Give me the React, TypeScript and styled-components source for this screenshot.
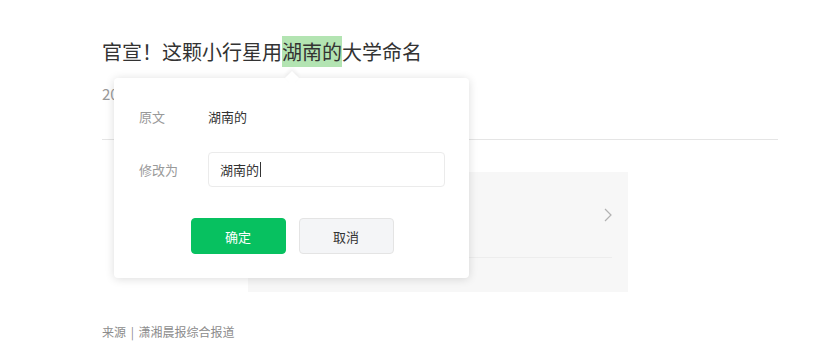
import React from 'react';
import styled, { createGlobalStyle } from 'styled-components';

const GlobalStyle = createGlobalStyle`
    html, body {
        margin: 0;
        padding: 0;
        background: #fff;
    }
    body {
        font-family: "Noto Sans CJK SC", "Noto Sans", "Liberation Sans", sans-serif;
        color: #333;
    }
`;

const Page = styled.div`
    position: relative;
    width: 837px;
    height: 364px;
    overflow: hidden;
`;

const Article = styled.article`
    width: 676px;
    padding: 36px 0 0 102px;
`;

const Title = styled.h1`
    margin: 0;
    font-size: 20px;
    font-weight: 400;
    line-height: 31px;
    color: #333;
`;

const Mark = styled.span`
    display: inline-block;
    background: #b3e4b2;
`;

const Meta = styled.div`
    margin-top: 17px;
    font-size: 15px;
    line-height: 20px;
    color: #999;
`;

const Divider = styled.hr`
    margin: 35px 0 0;
    border: 0;
    border-top: 1px solid #e5e5e5;
`;

const Card = styled.div`
    width: 380px;
    margin: 32px 0 0 146px;
    background: #f7f7f7;
    display: flex;
    flex-direction: column;
    padding: 0 16px;
    box-sizing: border-box;
`;

const CardMain = styled.div`
    height: 85px;
    display: flex;
    align-items: center;
    justify-content: flex-end;
    border-bottom: 1px solid #ededed;
    color: #b2b2b2;
`;

const CardFoot = styled.div`
    height: 34px;
`;

const Source = styled.p`
    margin: 31px 0 0;
    font-size: 12px;
    line-height: 17px;
    color: #8c8c8c;
    word-spacing: 2px;
`;

const Popover = styled.div`
    position: absolute;
    left: 114px;
    top: 78px;
    width: 355px;
    height: 200px;
    box-sizing: border-box;
    padding: 29px 24px 0 25px;
    background: #fff;
    border-radius: 4px;
    box-shadow: 0 1px 10px rgba(0, 0, 0, 0.14);

    &::before {
        content: '';
        position: absolute;
        top: -5px;
        left: 173px;
        width: 10px;
        height: 10px;
        background: #fff;
        transform: rotate(45deg);
        box-shadow: -2px -2px 4px rgba(0, 0, 0, 0.06);
    }
`;

const Row = styled.div<{ $top?: number }>`
    display: flex;
    align-items: center;
    margin-top: ${({ $top }) => $top || 0}px;
    font-size: 13px;
`;

const Label = styled.span`
    width: 69px;
    flex-shrink: 0;
    color: #999;
`;

const Value = styled.span`
    color: #333;
`;

const Field = styled.div`
    flex: 1;
    height: 35px;
    box-sizing: border-box;
    border: 1px solid #ebebeb;
    border-radius: 4px;
    padding-left: 11px;
    display: flex;
    align-items: center;
    color: #333;
    font-size: 13px;
`;

const Caret = styled.span`
    display: inline-block;
    width: 1px;
    height: 15px;
    background: #333;
    margin-left: 1px;
`;

const Actions = styled.div`
    display: flex;
    justify-content: center;
    gap: 13px;
    margin-top: 31px;
`;

const Button = styled.button<{ $primary?: boolean }>`
    width: 95px;
    height: 36px;
    border-radius: 4px;
    font-family: inherit;
    font-size: 13px;
    cursor: pointer;
    border: 1px solid ${({ $primary }) => ($primary ? '#07c160' : '#e4e4e4')};
    background: ${({ $primary }) => ($primary ? '#07c160' : '#f4f5f7')};
    color: ${({ $primary }) => ($primary ? '#fff' : '#333')};
`;

const Chevron = () => (
    <svg width="8" height="14" viewBox="0 0 8 14" fill="none">
        <path d="M1 1l6 6-6 6" stroke="currentColor" strokeWidth="1.2" />
    </svg>
);

export default function App() {
    return (
        <Page>
            <GlobalStyle />
            <Article>
                <Title>
                    官宣！这颗小行星用<Mark>湖南的</Mark>大学命名
                </Title>
                <Meta>2022-05-18</Meta>
                <Divider />
                <Card>
                    <CardMain>
                        <Chevron />
                    </CardMain>
                    <CardFoot />
                </Card>
                <Source>来源 | 潇湘晨报综合报道</Source>
            </Article>
            <Popover>
                <Row>
                    <Label>原文</Label>
                    <Value>湖南的</Value>
                </Row>
                <Row $top={26}>
                    <Label>修改为</Label>
                    <Field>
                        湖南的
                        <Caret />
                    </Field>
                </Row>
                <Actions>
                    <Button $primary>确定</Button>
                    <Button>取消</Button>
                </Actions>
            </Popover>
        </Page>
    );
}
